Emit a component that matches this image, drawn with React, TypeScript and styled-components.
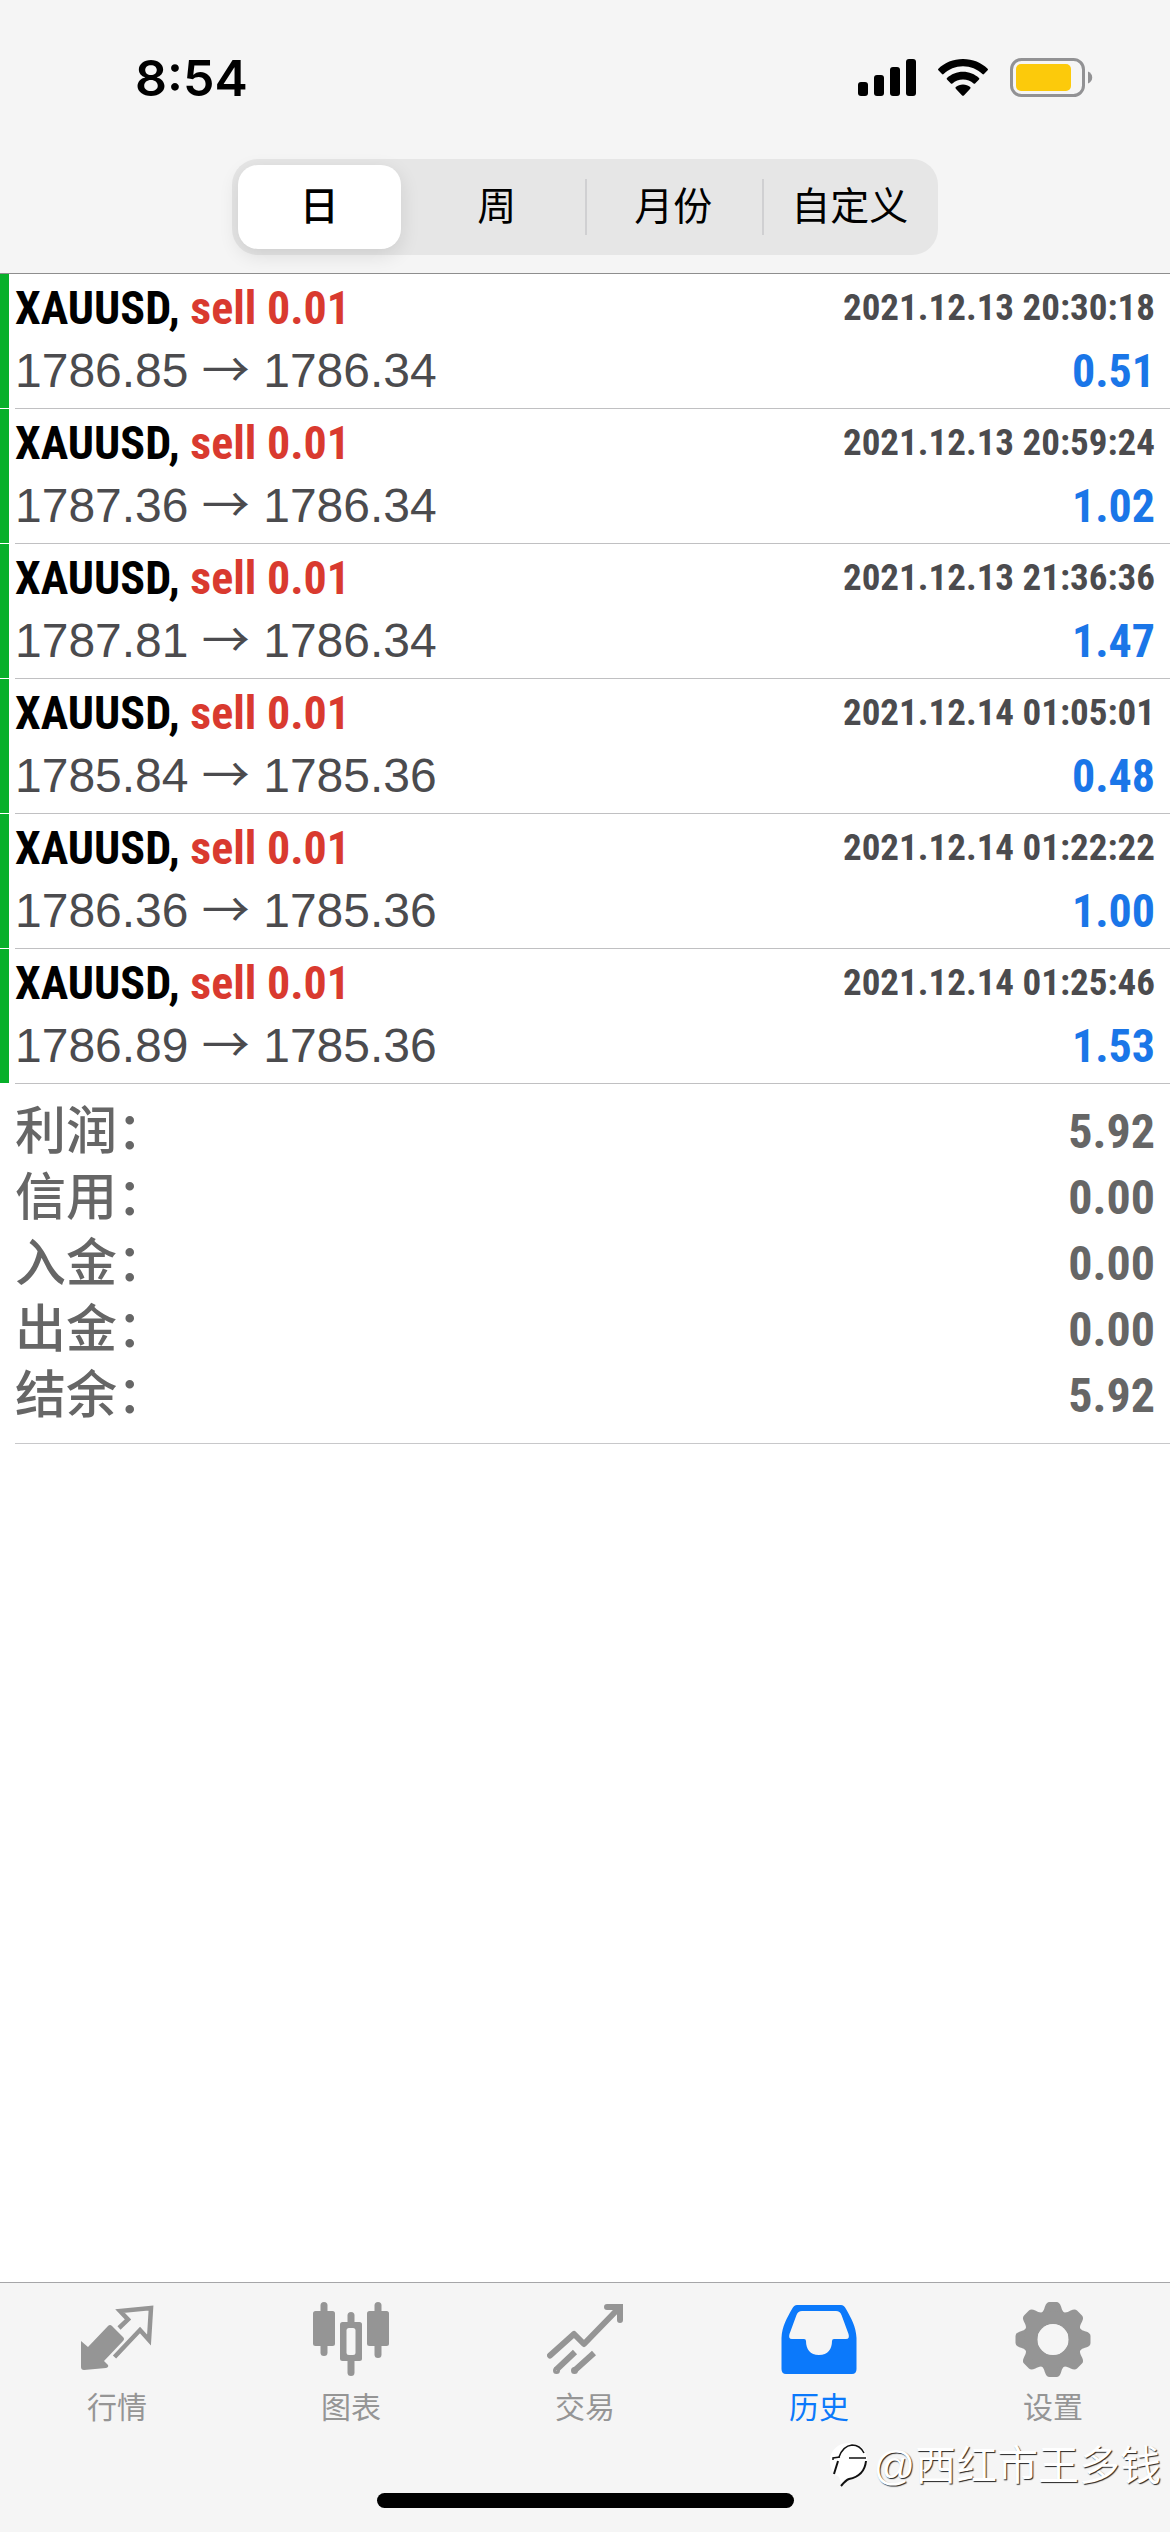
import React, { useState } from "react";
import styled, { createGlobalStyle } from "styled-components";

const sans = '"Liberation Sans", "Noto Sans CJK SC", sans-serif';
const narrow = '"Roboto Condensed", "Liberation Sans Narrow", "Liberation Sans", sans-serif';
const symbols = '"Noto Sans CJK SC", sans-serif';

const GlobalStyle = createGlobalStyle`
  *, *::before, *::after { box-sizing: border-box; }
  body { margin: 0; background: #fff; font-family: ${sans}; }
  button { font: inherit; border: 0; padding: 0; background: none; cursor: pointer; }
`;

const Screen = styled.div`
  display: flex;
  flex-direction: column;
  min-height: 100vh;
  background: #fff;
`;

const Header = styled.header`
  background: #f5f5f5;
  border-bottom: 1px solid #8e8e8e;
  padding-bottom: 18px;
`;

const StatusBar = styled.div`
  display: flex;
  align-items: center;
  justify-content: space-between;
  height: 159px;
  padding: 0 77px 3px 135px;
`;

const Clock = styled.time`
  font: 600 50px/60px Inter, sans-serif;
  color: #000;
`;

const StatusIcons = styled.div`
  display: flex;
  align-items: center;
  gap: 22px;
`;

const Segments = styled.div`
  display: grid;
  grid-template-columns: repeat(4, 1fr);
  width: 706px;
  max-width: 100%;
  height: 96px;
  margin: 0 auto;
  border-radius: 26px;
  background: #e6e6e6;
`;

const Segment = styled.button<{ $active: boolean; $divided: boolean }>`
  display: flex;
  align-items: center;
  justify-content: center;
  margin: ${(p) => (p.$active ? "6px 8px 6px 6px" : "20px 0")};
  border-radius: ${(p) => (p.$active ? "20px" : "0")};
  background: ${(p) => (p.$active ? "#fff" : "none")};
  box-shadow: ${(p) => (p.$active ? "0 6px 20px rgba(0, 0, 0, 0.11)" : p.$divided ? "inset 2px 0 #d0d0d2" : "none")};
  font: ${(p) => (p.$active ? 500 : 400)} 39px/56px ${sans};
  color: #000;
`;

const List = styled.ul`
  list-style: none;
  margin: 0;
  padding: 0;
`;

const Deal = styled.li`
  display: flex;
  height: 135px;
  &::before {
    content: "";
    width: 9px;
    margin-bottom: 1px;
    background: #08b02a;
  }
`;

const DealBody = styled.div`
  display: grid;
  flex: 1;
  grid-template-columns: 1fr auto;
  grid-template-rows: 67px 60px;
  align-items: center;
  margin-left: 6px;
  padding-right: 15px;
  border-bottom: 1px solid #c0c0c2;
`;

const Title = styled.strong`
  font: 700 46px/66px ${narrow};
  color: #000;
`;

const Side = styled.span`
  color: #d93a2f;
`;

const Stamp = styled.time`
  font: 700 37px/66px ${narrow};
  color: #4b4b4e;
  text-align: right;
`;

const Prices = styled.span`
  font: 400 48px/60px ${sans};
  color: #4b4b4e;
`;

const Arrow = styled.span`
  font-family: ${symbols};
  line-height: 1;
`;

const Profit = styled.span`
  font: 700 46px/60px ${narrow};
  color: #1a76e8;
  text-align: right;
`;

const Summary = styled.dl`
  margin: 0 0 0 15px;
  padding: 15px 15px 14px 0;
  border-bottom: 1px solid #c8c8ca;
`;

const SummaryRow = styled.div`
  display: flex;
  align-items: center;
  justify-content: space-between;
  height: 66px;
  color: #666;
`;

const Term = styled.dt`
  font: 500 51px/66px ${sans};
`;

const Amount = styled.dd`
  margin: 0;
  font: 700 48px/66px ${narrow};
`;

const Footer = styled.footer`
  position: relative;
  margin-top: auto;
  background: #f5f5f5;
  border-top: 1px solid #a6a6a8;
`;

const Tabs = styled.nav`
  display: grid;
  grid-template-columns: repeat(5, 1fr);
  height: 210px;
`;

const Tab = styled.button<{ $active: boolean }>`
  display: flex;
  flex-direction: column;
  align-items: center;
  gap: 8px;
  padding-top: 17px;
  align-self: start;
  color: ${(p) => (p.$active ? "#0b79fb" : "#959595")};
  font: 400 30px/44px ${sans};
`;

const HomeBar = styled.div`
  width: 417px;
  height: 15px;
  margin: 0 auto 24px;
  border-radius: 8px;
  background: #000;
`;

const Watermark = styled.div`
  position: absolute;
  right: 9px;
  bottom: 38px;
  display: flex;
  align-items: center;
  gap: 4px;
  font: 400 41px/56px ${sans};
  color: #fff;
  text-shadow: 1px 1px 1px #222;
`;

const deals = [
  { open: "1786.85", close: "1786.34", time: "2021.12.13 20:30:18", profit: "0.51" },
  { open: "1787.36", close: "1786.34", time: "2021.12.13 20:59:24", profit: "1.02" },
  { open: "1787.81", close: "1786.34", time: "2021.12.13 21:36:36", profit: "1.47" },
  { open: "1785.84", close: "1785.36", time: "2021.12.14 01:05:01", profit: "0.48" },
  { open: "1786.36", close: "1785.36", time: "2021.12.14 01:22:22", profit: "1.00" },
  { open: "1786.89", close: "1785.36", time: "2021.12.14 01:25:46", profit: "1.53" },
];

const totals = [
  ["利润：", "5.92"],
  ["信用：", "0.00"],
  ["入金：", "0.00"],
  ["出金：", "0.00"],
  ["结余：", "5.92"],
];

const SignalIcon = () => (
  <svg width="58" height="38" viewBox="0 0 58 38" aria-hidden="true">
    <rect x="0" y="23" width="10" height="14" rx="3" />
    <rect x="16" y="16" width="10" height="21" rx="3" />
    <rect x="32" y="8" width="10" height="29" rx="3" />
    <rect x="48" y="0" width="10" height="37" rx="3" />
  </svg>
);

const WifiIcon = () => (
  <svg width="50" height="38" viewBox="0 0 50 38" aria-hidden="true">
    <path d="M25 0C15.300 0 6.500 3.700.4 9.700q-.8.800 0 1.600l3.600 3.700q.8.800 1.600 0C10.700 10.200 17.500 7.300 25 7.300s14.300 2.900 19.400 7.700q.8.800 1.600 0l3.600-3.700q.8-.8 0-1.600C43.500 3.700 34.700 0 25 0z" />
    <path d="M25 12.700c-6.200 0-11.800 2.400-16 6.200q-.8.800 0 1.600l3.900 4q.7.700 1.500 0c2.800-2.500 6.500-4 10.600-4s7.800 1.500 10.600 4q.8.700 1.500 0l3.900-4q.8-.8 0-1.600c-4.200-3.800-9.800-6.200-16-6.200z" />
    <path d="M25 25.500c-2.800 0-5.300 1-7.200 2.600q-.8.800 0 1.600l6.300 6.700q.9.900 1.800 0l6.300-6.700q.8-.8 0-1.600c-1.900-1.600-4.400-2.600-7.200-2.600z" />
  </svg>
);

const BatteryIcon = () => (
  <svg width="83" height="40" viewBox="0 0 83 40" aria-hidden="true">
    <rect x="1.500" y="1.500" width="72" height="36" rx="10" fill="none" stroke="#929294" strokeWidth="3" />
    <rect x="6" y="6" width="55" height="27" rx="5" fill="#fcca0b" />
    <path d="M78 13.500c2.800 1 4.200 3.400 4.200 6s-1.400 5-4.200 6z" fill="#929294" />
  </svg>
);

const QuotesIcon = () => (
  <svg width="76" height="78" viewBox="0 0 76 78" fill="none" aria-hidden="true">
    <path d="M2 41l7 6 20-21q2-2 4 0l11 11q2 2 0 4L25 61l4 4q1 2-2 3L5 70q-3 0-3-3z" fill="currentColor" />
    <path d="M40 28l9-8.500L41 11l31-3-2 32-9-10-25.500 27" stroke="currentColor" strokeWidth="4.500" />
  </svg>
);

const ChartIcon = () => (
  <svg width="76" height="78" viewBox="0 0 76 78" aria-hidden="true">
    <g fill="currentColor">
      <rect x="0" y="11" width="22" height="35" rx="2.500" />
      <rect x="7.500" y="2" width="7" height="54" rx="3.500" />
      <rect x="54" y="11" width="22" height="35" rx="2.500" />
      <rect x="61.500" y="2" width="7" height="56" rx="3.500" />
      <rect x="27" y="22" width="22" height="39" rx="2.500" />
      <rect x="34.500" y="12" width="7" height="64" rx="3.500" />
    </g>
    <rect x="33.500" y="28" width="9" height="27" rx="2.500" fill="#f5f5f5" />
  </svg>
);

const TradeIcon = () => (
  <svg width="76" height="78" viewBox="0 0 76 78" fill="none" stroke="currentColor" strokeWidth="6" aria-hidden="true">
    <path d="M3 55.500L27 34l10 10L71 9" strokeLinejoin="round" strokeLinecap="round" />
    <path d="M60 7h13v13" strokeLinecap="round" />
    <path d="M62 4h12q2 0 2 2v12z" fill="currentColor" stroke="none" />
    <path d="M28 52L9 70M47 53L27 71" />
    <circle cx="9.500" cy="70.500" r="1.500" strokeWidth="4" />
    <circle cx="27.500" cy="70.500" r="1.500" strokeWidth="4" />
  </svg>
);

const HistoryIcon = () => (
  <svg width="76" height="78" viewBox="0 0 76 78" aria-hidden="true">
    <path
      fill="currentColor"
      fillRule="evenodd"
      d="M16 5h44q3 0 5 4c5 9 10 17 10.500 29v31q0 5-4.500 5H5q-4.500 0-4.500-5V38C1 26 6 18 11 9q2-4 5-4zM21 11q-4 0-5.500 4L8.500 34q-1.500 5 2.500 5h12q2 0 2 2c0 8 4 14 13 14s13-6 13-14q0-2 2-2h12q4 0 2.500-5L60.500 15q-1.500-4-5.500-4z"
    />
  </svg>
);

const GearIcon = () => (
  <svg width="76" height="78" viewBox="-38 -39.500 76 78" aria-hidden="true">
    <g fill="currentColor">
      {[0, 45, 90, 135, 180, 225, 270, 315].map((angle) => (
        <path
          key={angle}
          transform={`rotate(${angle})`}
          d="M-13-26C-9.500-27.500-9-30-8-33Q-6.500-37.500-3.500-37.500H3.500Q6.500-37.500 8-33C9-30 9.500-27.500 13-26L10-15H-10z"
        />
      ))}
    </g>
    <circle r="22" fill="none" stroke="currentColor" strokeWidth="13" />
    <circle r="15.500" fill="#f5f5f5" />
  </svg>
);

const WatermarkLogo = () => (
  <svg width="40" height="48" viewBox="0 0 40 48" fill="none" aria-hidden="true">
    <path d="M20 1c11 0 18 7 18 17 0 12-8 18-18 20l-7 6-3-9C4 32 1 27 1 19 1 8 9 1 20 1z" fill="#fff" />
    <g stroke="#111" strokeWidth="1.500">
      <path d="M4 18v-2l7-1" />
      <path d="M10 15Q14 4 23 3q8 0 12 8" />
      <path d="M20 16h17" />
      <path d="M9 19L5 32" strokeWidth="2" />
      <path d="M37 19c-1 10-7 16-17 18q-3 1-8 7" strokeWidth="2" />
    </g>
  </svg>
);

const tabs = [
  { label: "行情", Icon: QuotesIcon },
  { label: "图表", Icon: ChartIcon },
  { label: "交易", Icon: TradeIcon },
  { label: "历史", Icon: HistoryIcon },
  { label: "设置", Icon: GearIcon },
];

const periods = ["日", "周", "月份", "自定义"];

export default function App() {
  const [period, setPeriod] = useState(0);
  const [tab, setTab] = useState(3);

  return (
    <Screen>
      <GlobalStyle />
      <Header>
        <StatusBar>
          <Clock>8:54</Clock>
          <StatusIcons>
            <SignalIcon />
            <WifiIcon />
            <BatteryIcon />
          </StatusIcons>
        </StatusBar>
        <Segments>
          {periods.map((label, i) => (
            <Segment
              key={label}
              type="button"
              $active={i === period}
              $divided={i > 0 && i - 1 !== period}
              aria-pressed={i === period}
              onClick={() => setPeriod(i)}
            >
              {label}
            </Segment>
          ))}
        </Segments>
      </Header>

      <main>
        <List>
          {deals.map((deal) => (
            <Deal key={deal.time}>
              <DealBody>
                <Title>
                  XAUUSD, <Side>sell 0.01</Side>
                </Title>
                <Stamp>{deal.time}</Stamp>
                <Prices>
                  {deal.open} <Arrow>→</Arrow> {deal.close}
                </Prices>
                <Profit>{deal.profit}</Profit>
              </DealBody>
            </Deal>
          ))}
        </List>
        <Summary>
          {totals.map(([label, value]) => (
            <SummaryRow key={label}>
              <Term>{label}</Term>
              <Amount>{value}</Amount>
            </SummaryRow>
          ))}
        </Summary>
      </main>

      <Footer>
        <Tabs>
          {tabs.map(({ label, Icon }, i) => (
            <Tab key={label} type="button" $active={i === tab} onClick={() => setTab(i)}>
              <Icon />
              {label}
            </Tab>
          ))}
        </Tabs>
        <HomeBar />
        <Watermark>
          <WatermarkLogo />
          @西红市王多钱
        </Watermark>
      </Footer>
    </Screen>
  );
}
